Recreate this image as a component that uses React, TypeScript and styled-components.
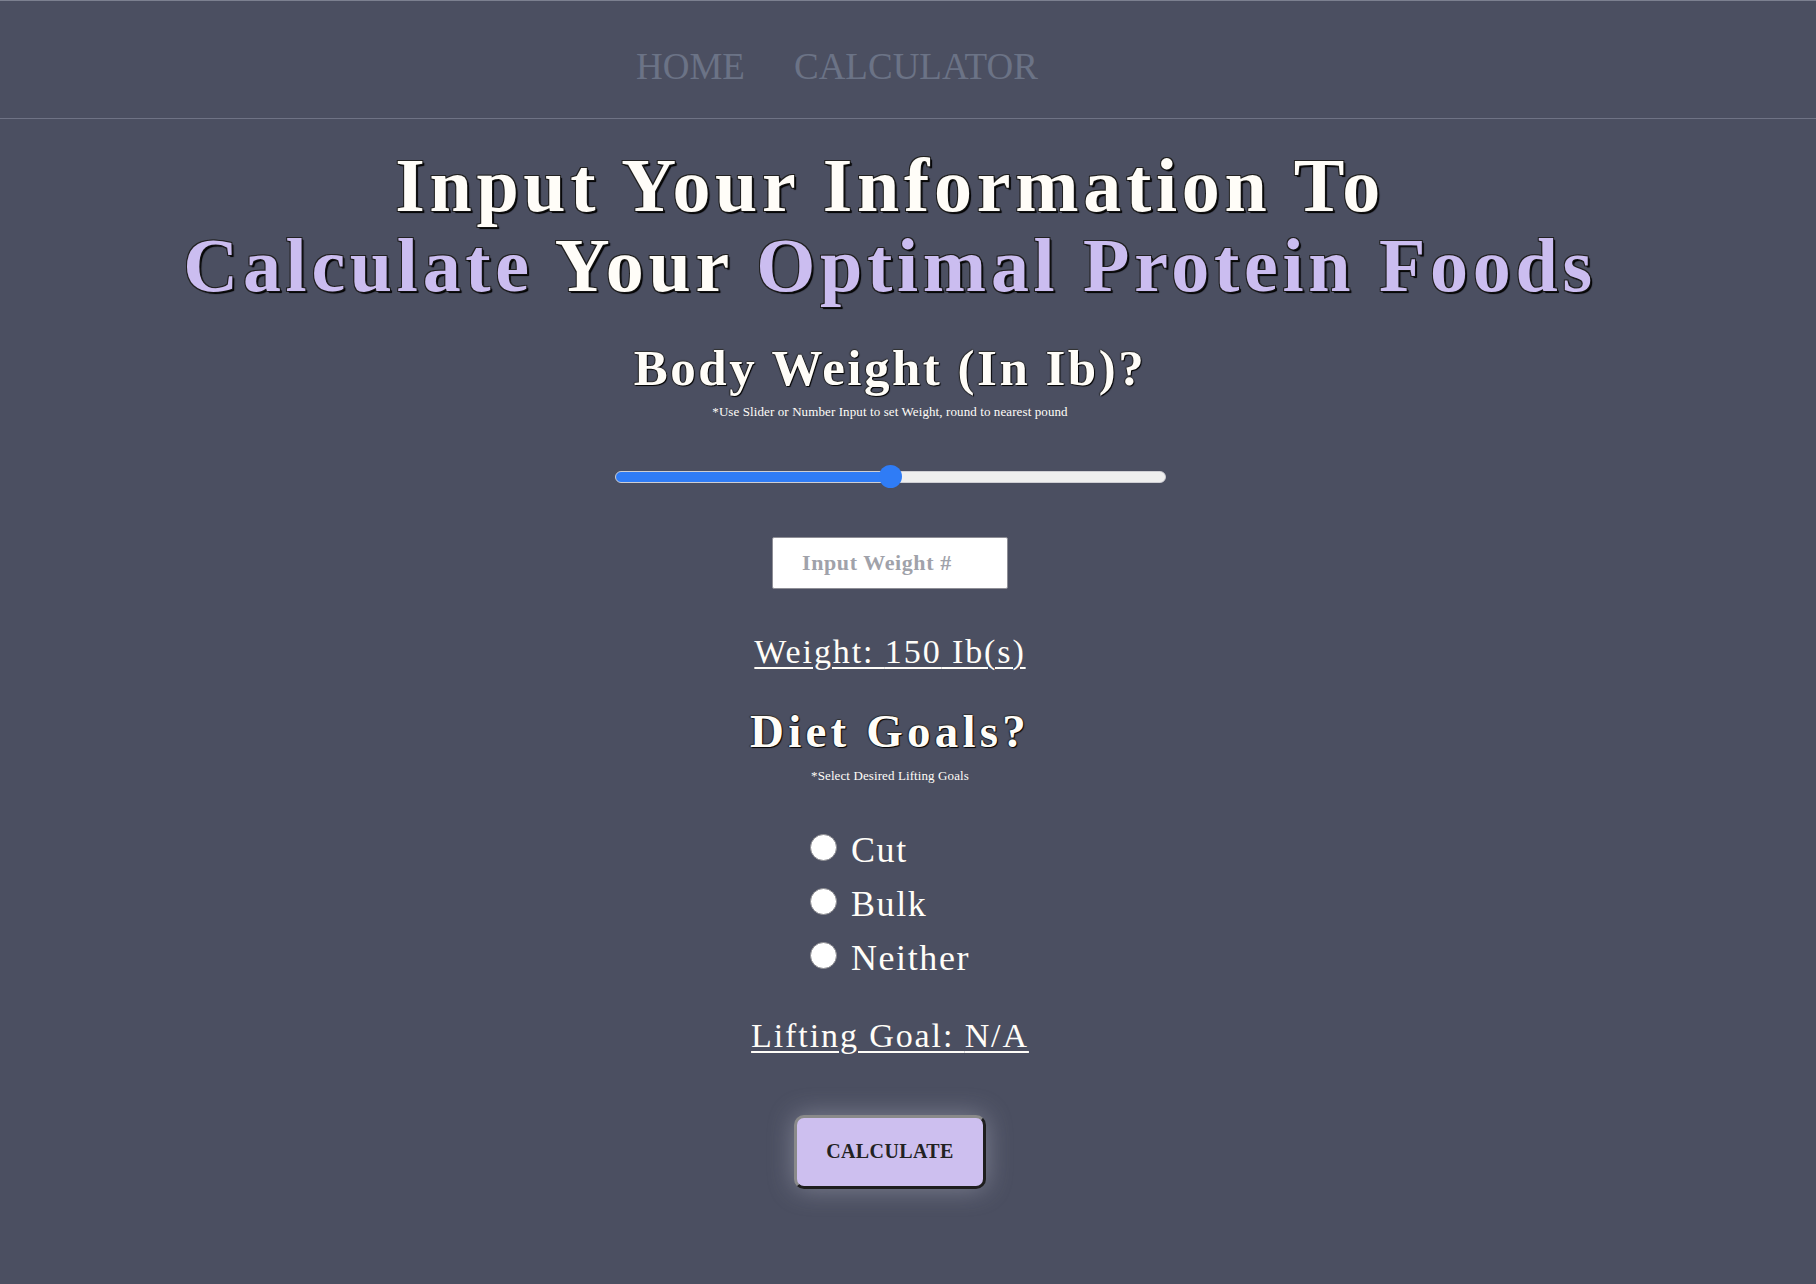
import React, { useState } from "react";
import styled, { createGlobalStyle } from "styled-components";

const GlobalStyle = createGlobalStyle`
  html, body {
    margin: 0;
    padding: 0;
    background: #4b4f61;
  }
  body {
    font-family: "Liberation Serif", "Times New Roman", serif;
    color: #fffdf8;
  }
  * { box-sizing: border-box; }
`;

const Page = styled.div`
  min-height: 1284px;
  background: #4b4f61;
`;

const NavBar = styled.nav`
  height: 119px;
  border-top: 1px solid #7c8090;
  border-bottom: 1px solid #6f7385;
  display: flex;
  align-items: flex-start;
  padding: 47px 0 0 636px;
  gap: 49px;
`;

const NavLink = styled.a`
  font-family: "Liberation Serif", "Times New Roman", serif;
  font-size: 37px;
  line-height: 1;
  color: #6b7386;
  text-decoration: none;
  cursor: pointer;
`;

const Main = styled.main`
  display: flex;
  flex-direction: column;
  align-items: center;
  padding: 26px 36px 80px 0;
`;

const outline = `
  1px 1px 0 #111,
  -1px -1px 0 #222,
  1px -1px 0 #222,
  -1px 1px 0 #222,
  2px 2px 1px #000
`;

const Title = styled.h1`
  margin: 0;
  text-align: center;
  font-family: "Liberation Serif", "Times New Roman", serif;
  font-weight: 700;
  font-size: 76px;
  line-height: 80px;
  letter-spacing: 4.7px;
  color: #fffdf8;
  text-shadow: ${outline};
`;

const Accent = styled.span`
  color: #cbbdf0;
`;

const Heading = styled.h2<{ $size: number; $spacing: number; $top: number }>`
  margin: ${(p) => p.$top}px 0 0;
  font-family: "Liberation Serif", "Times New Roman", serif;
  font-weight: 700;
  font-size: ${(p) => p.$size}px;
  line-height: 1.15;
  letter-spacing: ${(p) => p.$spacing}px;
  color: #fffdf8;
  text-shadow: 1px 1px 1px #000, -1px 0 1px #222, 0 -1px 1px #333;
`;

const Hint = styled.p<{ $top: number }>`
  margin: ${(p) => p.$top}px 0 0;
  font-family: "Liberation Serif", "Times New Roman", serif;
  font-size: 13px;
  line-height: 15px;
  letter-spacing: 0.1px;
  color: #fffdf8;
`;

const Slider = styled.input`
  -webkit-appearance: none;
  appearance: none;
  width: 551px;
  height: 12px;
  margin: 52px 0 0 0;
  border-radius: 6px;
  border: 1px solid #cfcfd4;
  outline: none;
  cursor: pointer;

  &::-webkit-slider-thumb {
    -webkit-appearance: none;
    appearance: none;
    width: 23px;
    height: 23px;
    border-radius: 50%;
    background: #2f7cf6;
    border: none;
  }
  &::-moz-range-thumb {
    width: 23px;
    height: 23px;
    border-radius: 50%;
    background: #2f7cf6;
    border: none;
  }
`;

const WeightInput = styled.input`
  margin-top: 54px;
  width: 236px;
  height: 52px;
  padding: 0 0 0 29px;
  border: 1px solid #8e8e96;
  border-radius: 2px;
  background: #ffffff;
  font-family: "Liberation Serif", "Times New Roman", serif;
  font-weight: 700;
  font-size: 22px;
  letter-spacing: 0.6px;
  color: #333;
  outline: none;

  &::placeholder {
    color: #a0a2aa;
    font-weight: 700;
  }
`;

const Readout = styled.p<{ $top: number }>`
  margin: ${(p) => p.$top}px 0 0;
  font-family: "Liberation Serif", "Times New Roman", serif;
  font-size: 34px;
  line-height: 39px;
  letter-spacing: 1.9px;
  color: #fffdf8;
  text-decoration: underline;
  text-decoration-thickness: 2px;
  text-underline-offset: 4px;
`;

const RadioGroup = styled.div`
  margin-top: 40px;
  display: flex;
  flex-direction: column;
  align-items: flex-start;
`;

const RadioRow = styled.label`
  display: flex;
  align-items: center;
  height: 54px;
  gap: 14px;
  cursor: pointer;
`;

const RadioDot = styled.input`
  -webkit-appearance: none;
  appearance: none;
  margin: 0 0 5px 0;
  width: 27px;
  height: 27px;
  border-radius: 50%;
  background: #ffffff;
  border: 1.5px solid #8a8a8f;
  cursor: pointer;

  &:checked {
    background: radial-gradient(circle, #2f7cf6 0 6px, #ffffff 7px);
  }
`;

const RadioLabel = styled.span`
  font-family: "Liberation Serif", "Times New Roman", serif;
  font-size: 36px;
  line-height: 54px;
  letter-spacing: 1.6px;
  color: #fffdf8;
`;

const CalcButton = styled.button`
  margin-top: 60px;
  width: 192px;
  height: 74px;
  border-radius: 10px;
  border: 3px solid;
  border-color: #8a8a8a #1e1e1e #1e1e1e #8a8a8a;
  background: #cdbfef;
  font-family: "Liberation Serif", "Times New Roman", serif;
  font-weight: 700;
  font-size: 20px;
  letter-spacing: 0.4px;
  color: #222222;
  box-shadow: 0 0 26px rgba(220, 220, 235, 0.35);
  cursor: pointer;
`;

const goals = ["Cut", "Bulk", "Neither"];

export default function App() {
  const [weight, setWeight] = useState(150);
  const [goal, setGoal] = useState<string | null>(null);
  const pct = (weight / 300) * 100;

  return (
    <Page>
      <GlobalStyle />
      <NavBar>
        <NavLink>HOME</NavLink>
        <NavLink>CALCULATOR</NavLink>
      </NavBar>
      <Main>
        <Title>
          Input Your Information To
          <br />
          <Accent>Calculate</Accent> Your <Accent>Optimal Protein Foods</Accent>
        </Title>

        <Heading $size={51} $spacing={2.5} $top={34}>
          Body Weight (In Ib)?
        </Heading>
        <Hint $top={6}>*Use Slider or Number Input to set Weight, round to nearest pound</Hint>

        <Slider
          type="range"
          min={0}
          max={300}
          value={weight}
          onChange={(e) => setWeight(Number(e.target.value))}
          style={{
            background: `linear-gradient(to right, #2f7cf6 0%, #2f7cf6 ${pct}%, #efefef ${pct}%, #efefef 100%)`,
          }}
        />

        <WeightInput type="number" placeholder="Input Weight #" />

        <Readout $top={43}>Weight: {weight} Ib(s)</Readout>

        <Heading $size={47} $spacing={4.2} $top={33}>
          Diet Goals?
        </Heading>
        <Hint $top={10}>*Select Desired Lifting Goals</Hint>

        <RadioGroup>
          {goals.map((g) => (
            <RadioRow key={g}>
              <RadioDot
                type="radio"
                name="goal"
                checked={goal === g}
                onChange={() => setGoal(g)}
              />
              <RadioLabel>{g}</RadioLabel>
            </RadioRow>
          ))}
        </RadioGroup>

        <Readout $top={31}>Lifting Goal: {goal ?? "N/A"}</Readout>

        <CalcButton>CALCULATE</CalcButton>
      </Main>
    </Page>
  );
}
